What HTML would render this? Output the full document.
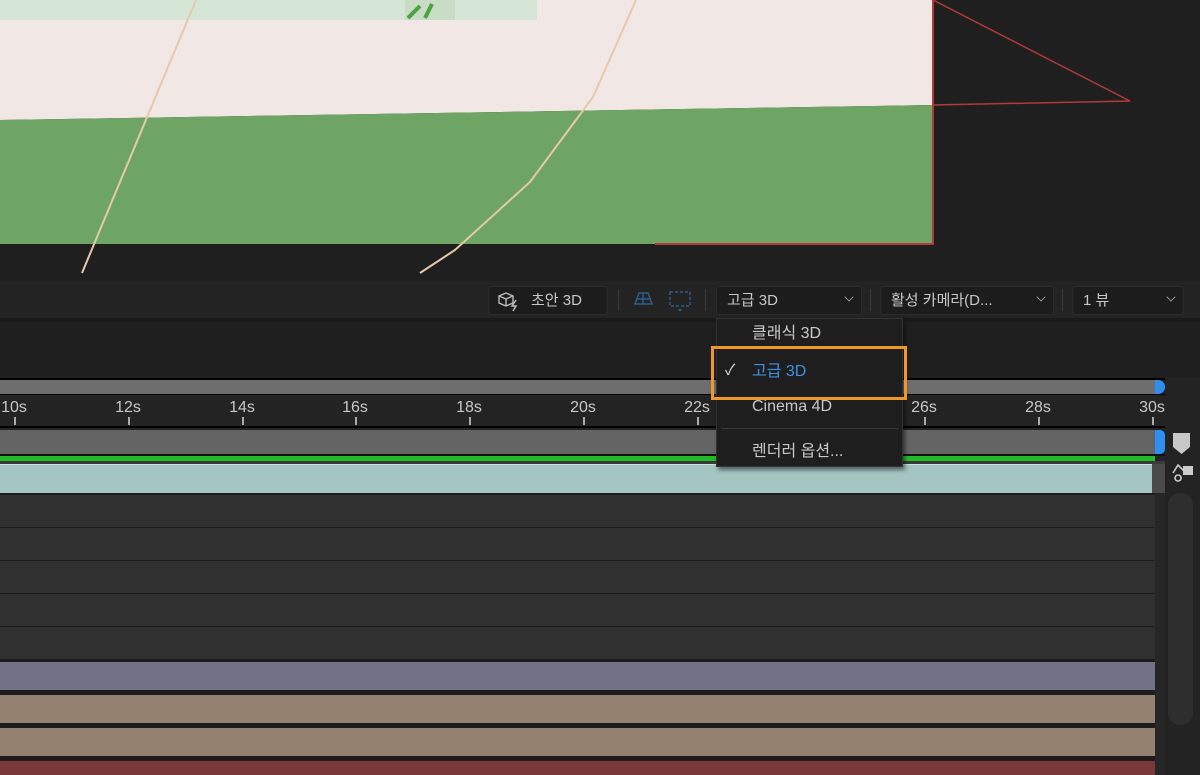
<!DOCTYPE html>
<html><head><meta charset="utf-8"><style>
*{margin:0;padding:0;box-sizing:border-box}
body{width:1200px;height:775px;overflow:hidden;background:#232323;position:relative;font-family:"Liberation Sans","Noto Sans CJK KR",sans-serif}
.a{position:absolute}
.btn{position:absolute;top:286px;height:29px;background:#1c1c1c;border:1px solid #2c2c2c;border-radius:3px;color:#c8c8c8;font-size:15px;line-height:27px;padding-left:10px}
.chev{position:absolute;right:8px;width:8px;height:8px;border-right:1.5px solid #aaa;border-bottom:1.5px solid #aaa;transform:rotate(45deg) scale(.8);top:6px}
.tick{position:absolute;top:399px;font-size:16px;color:#c8c8c8;transform:translateX(-50%)}
.tk{position:absolute;top:417px;width:2px;height:8px;background:#aaa}
.row{position:absolute;left:0;width:1155px;height:32px;background:#303030}
.mi{position:absolute;left:752px;font-size:16px;color:#c8c8c8}
</style></head><body>
<div class="a" style="left:0;top:0;width:1200px;height:281px;background:#1f1f1f"></div>
<svg class="a" style="left:0;top:0" width="1200" height="281">
<polygon points="0,0 933,0 933,105 0,120" fill="#f1e8e6"/>
<polygon points="0,120 933,105 933,244 0,244" fill="#6ea565"/>
<rect x="0" y="0" width="537" height="20" fill="#d6e6d6"/>
<rect x="405" y="0" width="50" height="20" fill="#c9dcc6"/>
<path d="M408 18 L420 6 M425 18 L432 4" stroke="#4aa33f" stroke-width="4"/>
<path d="M933 0 L1130 101 L933 105" fill="none" stroke="#b33a3a" stroke-width="1.5"/>
<path d="M933 0 V244 H655" fill="none" stroke="#b33a3a" stroke-width="2"/>
<path d="M196 0 L82 273" stroke="#e6c9a8" stroke-width="2" fill="none"/>
<path d="M636 0 L593 97 L530 182 L455 250 L420 273" stroke="#e6c9a8" stroke-width="2" fill="none"/>
</svg>
<div class="a" style="left:0;top:281px;width:1200px;height:38px;background:#232323"></div>
<div class="a" style="left:0;top:318px;width:1200px;height:4px;background:#1a1a1a"></div>
<div class="btn" style="left:488px;width:120px;padding-left:42px">초안 3D</div>
<svg class="a" style="left:498px;top:290px" width="26" height="22"><path d="M8 3 L15 6 V13 L8 16 L1 13 V6 Z M1 6 L8 9 L15 6 M8 9 V16" fill="none" stroke="#bbb" stroke-width="1.4"/><path d="M18 10 L14 16 H18 L15 21" fill="none" stroke="#bbb" stroke-width="1.5"/></svg>
<div class="a" style="left:618px;top:289px;width:1px;height:22px;background:#3a3a3a"></div>
<svg class="a" style="left:630px;top:288px" width="70" height="26"><path d="M5 16 L9 5 H18 L22 16 Z M13 5 V16 M6 11 H21" fill="none" stroke="#2f5c8a" stroke-width="1.5"/><rect x="40" y="4" width="20" height="14" fill="none" stroke="#2f5c8a" stroke-width="1.5" stroke-dasharray="3 2"/><path d="M48 21 L52 21 L50 24Z" fill="#2f5c8a"/></svg>
<div class="a" style="left:705px;top:289px;width:1px;height:22px;background:#3a3a3a"></div>
<div class="btn" style="left:716px;width:146px">고급 3D<span class="chev"></span></div>
<div class="a" style="left:870px;top:289px;width:1px;height:22px;background:#3a3a3a"></div>
<div class="btn" style="left:880px;width:174px">활성 카메라(D...<span class="chev"></span></div>
<div class="a" style="left:1062px;top:289px;width:1px;height:22px;background:#3a3a3a"></div>
<div class="btn" style="left:1072px;width:112px">1 뷰<span class="chev"></span></div>
<div class="a" style="left:0;top:322px;width:1200px;height:56px;background:#1f1f1f"></div>
<div class="a" style="left:0;top:378px;width:1165px;height:2px;background:#000"></div>
<div class="a" style="left:0;top:380px;width:1158px;height:14px;background:#6e6e6e"></div>
<div class="a" style="left:1155px;top:380px;width:10px;height:14px;background:#2d8ff0;border-radius:0 7px 7px 0"></div>
<div class="a" style="left:0;top:394px;width:1165px;height:34px;background:#232323;border-top:1px solid #000;border-bottom:2px solid #000"></div>
<div class="tick" style="left:14px">10s</div><div class="tk" style="left:14px"></div>
<div class="tick" style="left:128px">12s</div><div class="tk" style="left:128px"></div>
<div class="tick" style="left:242px">14s</div><div class="tk" style="left:242px"></div>
<div class="tick" style="left:355px">16s</div><div class="tk" style="left:355px"></div>
<div class="tick" style="left:469px">18s</div><div class="tk" style="left:469px"></div>
<div class="tick" style="left:583px">20s</div><div class="tk" style="left:583px"></div>
<div class="tick" style="left:697px">22s</div><div class="tk" style="left:697px"></div>
<div class="tick" style="left:924px">26s</div><div class="tk" style="left:924px"></div>
<div class="tick" style="left:1038px">28s</div><div class="tk" style="left:1038px"></div>
<div class="tick" style="left:1152px">30s</div><div class="tk" style="left:1152px"></div>
<div class="a" style="left:0;top:430px;width:1158px;height:24px;background:#646464"></div>
<div class="a" style="left:1155px;top:430px;width:10px;height:24px;background:#2d8ff0;border-radius:0 5px 5px 0"></div>
<div class="a" style="left:0;top:454px;width:1165px;height:2px;background:#111"></div>
<div class="a" style="left:0;top:456px;width:1155px;height:5px;background:#22bb2a"></div>
<div class="a" style="left:0;top:461px;width:1165px;height:3px;background:#3a3a3a"></div>
<div class="a" style="left:0;top:464px;width:1152px;height:29px;background:#a5c5c2;border-top:1px solid #d0e0dd"></div>
<div class="a" style="left:1152px;top:464px;width:13px;height:29px;background:#4a4a4a"></div>
<div class="a" style="left:0;top:493px;width:1165px;height:282px;background:#1c1c1c"></div>
<div class="row" style="top:495px"></div><div class="row" style="top:528px"></div><div class="row" style="top:561px"></div><div class="row" style="top:594px"></div><div class="row" style="top:627px"></div>
<div class="row" style="top:662px;height:28px;background:#727286"></div>
<div class="row" style="top:695px;height:28px;background:#948170"></div>
<div class="row" style="top:728px;height:28px;background:#948170"></div>
<div class="row" style="top:761px;height:14px;background:#7a3838"></div>
<div class="a" style="left:1155px;top:493px;width:10px;height:282px;background:#262626"></div>
<div class="a" style="left:1165px;top:428px;width:35px;height:347px;background:#232323"></div>
<svg class="a" style="left:1170px;top:430px" width="26" height="60"><path d="M3 3 H20 V17 L11.5 24 L3 17Z" fill="#c8c8c8"/><path d="M3 43 L8 35 L14 41 M8 45 A3 3 0 1 0 8.1 45" fill="none" stroke="#ccc" stroke-width="1.6"/><rect x="13" y="36" width="10" height="9" fill="#ccc"/></svg>
<div class="a" style="left:1168px;top:493px;width:25px;height:232px;background:#2e2e2e;border-radius:12px"></div>
<div class="a" style="left:716px;top:318px;width:187px;height:149px;background:#1e1e1e;border:1px solid #333;box-shadow:2px 3px 4px rgba(0,0,0,.5)"></div>
<div class="mi" style="top:319px">클래식 3D</div>
<div class="mi" style="top:357px;color:#3d92e6">고급 3D</div>
<div class="a" style="left:725px;top:359px;color:#ddd;font-size:15px">✓</div>
<div class="mi" style="top:398px">Cinema 4D</div>
<div class="a" style="left:722px;top:428px;width:176px;height:1px;background:#3a3a3a"></div>
<div class="mi" style="top:437px">렌더러 옵션...</div>
<div class="a" style="left:711px;top:346px;width:196px;height:54px;border:3px solid #f0962a"></div>
</body></html>
